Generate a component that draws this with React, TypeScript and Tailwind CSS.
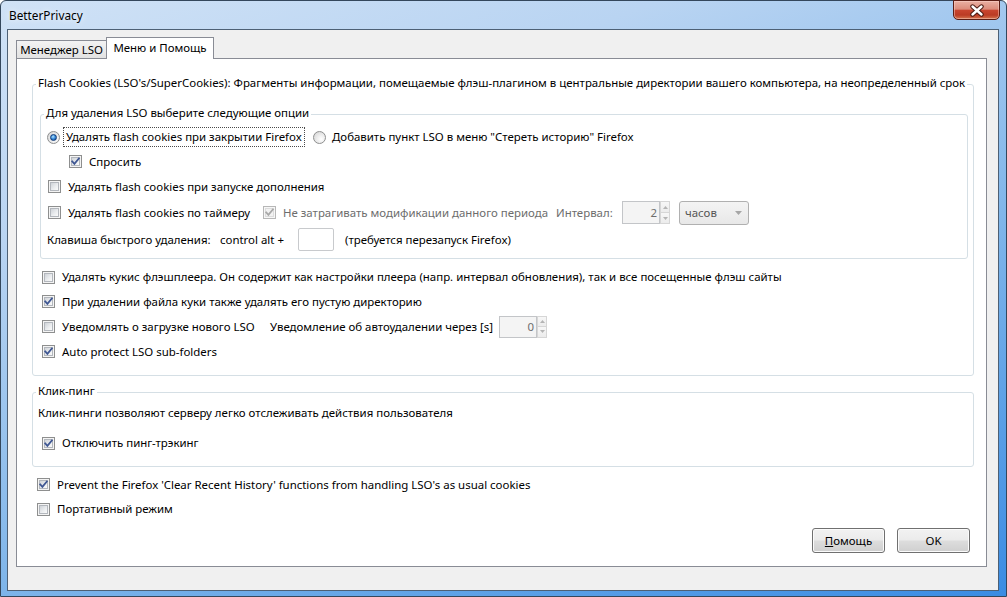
import React from "react";

type CbProps = { checked?: boolean; disabled?: boolean };

const Checkbox = ({ checked = false, disabled = false }: CbProps) => (
  <div
    className={
      disabled
        ? "relative w-[13px] h-[13px] shrink-0 border border-[#b7b7b7] bg-[#f7f7f7] p-[1px]"
        : "relative w-[13px] h-[13px] shrink-0 border border-[#8e8f8f] bg-[#f4f4f4] p-[1px]"
    }
  >
    <div
      className={
        disabled
          ? "w-full h-full border border-[#dcdcdc] bg-[#f2f2f2]"
          : "w-full h-full border border-[#b3b7bd] bg-[linear-gradient(135deg,#cfd3d8_0%,#eceef0_60%,#fafafa_100%)]"
      }
    />
    {checked && (
      <svg className="absolute left-[-1px] top-[-1px]" width="13" height="13" viewBox="0 0 13 13">
        <path
          d="M3.2 6.4 L5.4 8.9 L9.9 3.4"
          fill="none"
          stroke={disabled ? "#a8a8a8" : "#3f5793"}
          strokeWidth="1.8"
          strokeLinecap="square"
        />
      </svg>
    )}
  </div>
);

const Radio = ({ checked = false }: { checked?: boolean }) => (
  <div className="w-[13px] h-[13px] shrink-0 rounded-full border border-[#8e8f8f] bg-[radial-gradient(circle_at_65%_65%,#ffffff_0%,#e4e4e4_60%,#cfcfcf_100%)] flex items-center justify-center">
    {checked && (
      <div className="w-[7px] h-[7px] rounded-full bg-[radial-gradient(circle_at_40%_35%,#b6e6ff_0%,#3c8fdd_45%,#103f86_100%)] border border-[#0f3a78]" />
    )}
  </div>
);

const CheckRow = ({
  checked,
  disabled,
  children,
  className = "",
}: CbProps & { children: React.ReactNode; className?: string }) => (
  <div className={"flex items-center " + className}>
    <Checkbox checked={checked} disabled={disabled} />
    <span className={"ml-[7px] whitespace-nowrap " + (disabled ? "text-[#6d6d6d]" : "")}>{children}</span>
  </div>
);

const Group = ({
  label,
  className,
  children,
}: {
  label: string;
  className: string;
  children: React.ReactNode;
}) => (
  <div className={"relative shrink-0 border border-[#d5dfe5] rounded-[3px] flex flex-col " + className}>
    <span className="absolute left-[3px] -top-[10px] px-[2px] bg-white leading-[16px] whitespace-nowrap">{label}</span>
    {children}
  </div>
);

const Tri = ({ up }: { up?: boolean }) => (
  <svg width="5" height="3" viewBox="0 0 5 3">
    <path d={up ? "M0 3 L2.5 0 L5 3 Z" : "M0 0 L2.5 3 L5 0 Z"} fill="#b4b4b4" />
  </svg>
);

const Spin = ({ value, boxClass }: { value: string; boxClass: string }) => (
  <div className="flex shrink-0">
    <div
      className={
        "border border-[#c3c5c8] bg-[#f4f4f4] text-[#6d6d6d] flex items-center justify-end pr-[2px] " + boxClass
      }
    >
      {value}
    </div>
    <div className="w-[10px] flex flex-col">
      <div className="flex-1 border border-[#d6d6d6] bg-[linear-gradient(to_bottom,#f7f7f7,#ececec)] flex items-center justify-center">
        <Tri up />
      </div>
      <div className="flex-1 border border-t-0 border-[#d6d6d6] bg-[linear-gradient(to_bottom,#f7f7f7,#ececec)] flex items-center justify-center">
        <Tri />
      </div>
    </div>
  </div>
);

const Button = ({ children }: { children: React.ReactNode }) => (
  <div className="w-[73px] h-[25px] rounded-[3px] border border-[#707070] bg-[linear-gradient(to_bottom,#f2f2f2_0%,#ebebeb_48%,#dddddd_52%,#cfcfcf_100%)] shadow-[inset_0_0_0_1px_#fbfbfb] flex items-center justify-center">
    {children}
  </div>
);

const CloseButton = () => (
  <div className="w-[47px] h-[20px] -mt-[1px] mr-[6px] rounded-b-[5px] border border-[#5b1d14] bg-[linear-gradient(to_bottom,#eab0a3_0%,#dc8c7b_45%,#c8452f_52%,#bb3b24_78%,#d4754f_100%)] shadow-[inset_0_0_0_1px_rgba(255,220,210,0.45)] flex items-center justify-center">
    <svg width="16" height="13" viewBox="0 0 16 13">
      <path d="M3.5 2.5 L12.5 10.5 M12.5 2.5 L3.5 10.5" stroke="#4a1a12" strokeWidth="4.4" strokeLinecap="round" />
      <path d="M3.5 2.5 L12.5 10.5 M12.5 2.5 L3.5 10.5" stroke="#ffffff" strokeWidth="2.4" strokeLinecap="round" />
    </svg>
  </div>
);

export default function App() {
  return (
    <div className="w-[1007px] h-[597px] overflow-hidden bg-white text-[11.45px] leading-[16px] text-black [font-family:'Segoe_UI','Noto_Sans',sans-serif]">
      <div className="w-full h-full rounded-t-[6px] border border-[#34475c] bg-[linear-gradient(160deg,#d0e2f6_0%,#b9d4f2_25%,#80b6ea_60%,#3a8ce3_100%)] flex flex-col">
        {/* Title bar */}
        <div className="h-[28px] shrink-0 flex items-start justify-between">
          <span className="ml-[8px] leading-[28px] text-[11.8px] [text-shadow:0_0_6px_#ffffff]">BetterPrivacy</span>
          <CloseButton />
        </div>

        {/* Client area */}
        <div className="ml-[6px] mr-[7px] h-[562px] shrink-0 border border-[#4d6075] bg-[#f0f0f0] flex flex-col pt-[7px]">
          {/* Tabs */}
          <div className="relative z-10 flex items-end h-[21px] pl-[8px] shrink-0">
            <div className="h-[18px] w-[91px] border border-b-0 border-[#898c95] bg-[linear-gradient(to_bottom,#f3f3f3,#e2e2e2)] flex items-center justify-center whitespace-nowrap">
              Менеджер LSO
            </div>
            <div className="h-[22px] w-[108px] -ml-[1px] -mb-[1px] border border-b-0 border-[#898c95] bg-white flex items-center justify-center pb-[2px] whitespace-nowrap">
              Меню и Помощь
            </div>
          </div>

          {/* Panel */}
          <div className="ml-[8px] w-[971px] h-[509px] shrink-0 border border-[#898c95] bg-white flex flex-col pl-[15px] pt-[25px]">
            <Group
              label="Flash Cookies (LSO's/SuperCookies): Фрагменты информации, помещаемые флэш-плагином в центральные директории вашего компьютера, на неопределенный срок"
              className="w-[942px] h-[292px] pl-[7px] pt-[29px]"
            >
              <Group label="Для удаления LSO выберите следующие опции" className="w-[928px] h-[145px] pl-[7px] pt-[10px]">
                {/* Row 1 */}
                <div className="flex items-center h-[24px]">
                  <div className="w-[266px] -ml-[1px] shrink-0 flex items-center">
                    <Radio checked />
                    <span className="ml-[3px] px-[2px] h-[20px] border border-dotted border-[#4a4a4a] flex items-center whitespace-nowrap">
                      Удалять flash cookies при закрытии Firefox
                    </span>
                  </div>
                  <Radio />
                  <span className="ml-[6px] whitespace-nowrap">Добавить пункт LSO в меню "Стереть историю" Firefox</span>
                </div>
                {/* Row 2 */}
                <CheckRow checked className="h-[25px] pl-[21px]">
                  Спросить
                </CheckRow>
                {/* Row 3 */}
                <CheckRow className="h-[25px]">Удалять flash cookies при запуске дополнения</CheckRow>
                {/* Row 4 */}
                <div className="flex items-center h-[27px]">
                  <CheckRow className="w-[215px] shrink-0">Удалять flash cookies по таймеру</CheckRow>
                  <CheckRow checked disabled className="w-[293px] shrink-0">
                    Не затрагивать модификации данного периода
                  </CheckRow>
                  <span className="w-[66px] shrink-0 text-[#6d6d6d] whitespace-nowrap">Интервал:</span>
                  <Spin value="2" boxClass="w-[38px] h-[23px]" />
                  <div className="ml-[9px] w-[70px] h-[24px] rounded-[3px] border border-[#b0b0b0] bg-[linear-gradient(to_bottom,#f4f4f4,#e8e8e8)] flex items-center justify-between pl-[5px] pr-[6px] text-[#555]">
                    <span>часов</span>
                    <svg width="7" height="4" viewBox="0 0 7 4">
                      <path d="M0 0 L3.5 4 L7 0 Z" fill="#a6a6a6" />
                    </svg>
                  </div>
                </div>
                {/* Row 5 */}
                <div className="flex items-center h-[27px] -ml-[1px]">
                  <span className="w-[173px] shrink-0 whitespace-nowrap">Клавиша быстрого удаления:</span>
                  <span className="w-[78px] shrink-0 whitespace-nowrap">control alt +</span>
                  <div className="w-[36px] h-[23px] shrink-0 rounded-[2px] border border-[#c8cacd] bg-white" />
                  <span className="ml-[11px] whitespace-nowrap">(требуется перезапуск Firefox)</span>
                </div>
              </Group>

              <div className="flex flex-col mt-[6px] ml-[2px]">
                <CheckRow className="h-[24px]">
                  Удалять кукис флэшплеера. Он содержит как настройки плеера (напр. интервал обновления), так и все посещенные флэш сайты
                </CheckRow>
                <CheckRow checked className="h-[25px]">
                  При удалении файла куки также удалять его пустую директорию
                </CheckRow>
                <div className="flex items-center h-[25px]">
                  <CheckRow className="w-[228px] shrink-0">Уведомлять о загрузке нового LSO</CheckRow>
                  <span className="w-[229px] shrink-0 whitespace-nowrap">Уведомление об автоудалении через [s]</span>
                  <Spin value="0" boxClass="w-[38px] h-[22px]" />
                </div>
                <CheckRow checked className="h-[25px]">
                  Auto protect LSO sub-folders
                </CheckRow>
              </div>
            </Group>

            <Group label="Клик-пинг" className="mt-[16px] w-[942px] h-[75px] pl-[5px] pt-[10px]">
              <div className="h-[20px] flex items-center whitespace-nowrap">
                Клик-пинги позволяют серверу легко отслеживать действия пользователя
              </div>
              <CheckRow checked className="mt-[8px] h-[24px] ml-[4px]">
                Отключить пинг-трэкинг
              </CheckRow>
            </Group>

            <div className="flex flex-col mt-[5px] pl-[5px]">
              <CheckRow checked className="h-[25px]">
                Prevent the Firefox 'Clear Recent History' functions from handling LSO's as usual cookies
              </CheckRow>
              <CheckRow className="h-[24px]">Портативный режим</CheckRow>
            </div>

            <div className="mt-[7px] flex justify-end gap-[12px] pr-[16px]">
              <Button>
                <span>
                  <span className="underline">П</span>омощь
                </span>
              </Button>
              <Button>OK</Button>
            </div>
          </div>
        </div>
      </div>
    </div>
  );
}
